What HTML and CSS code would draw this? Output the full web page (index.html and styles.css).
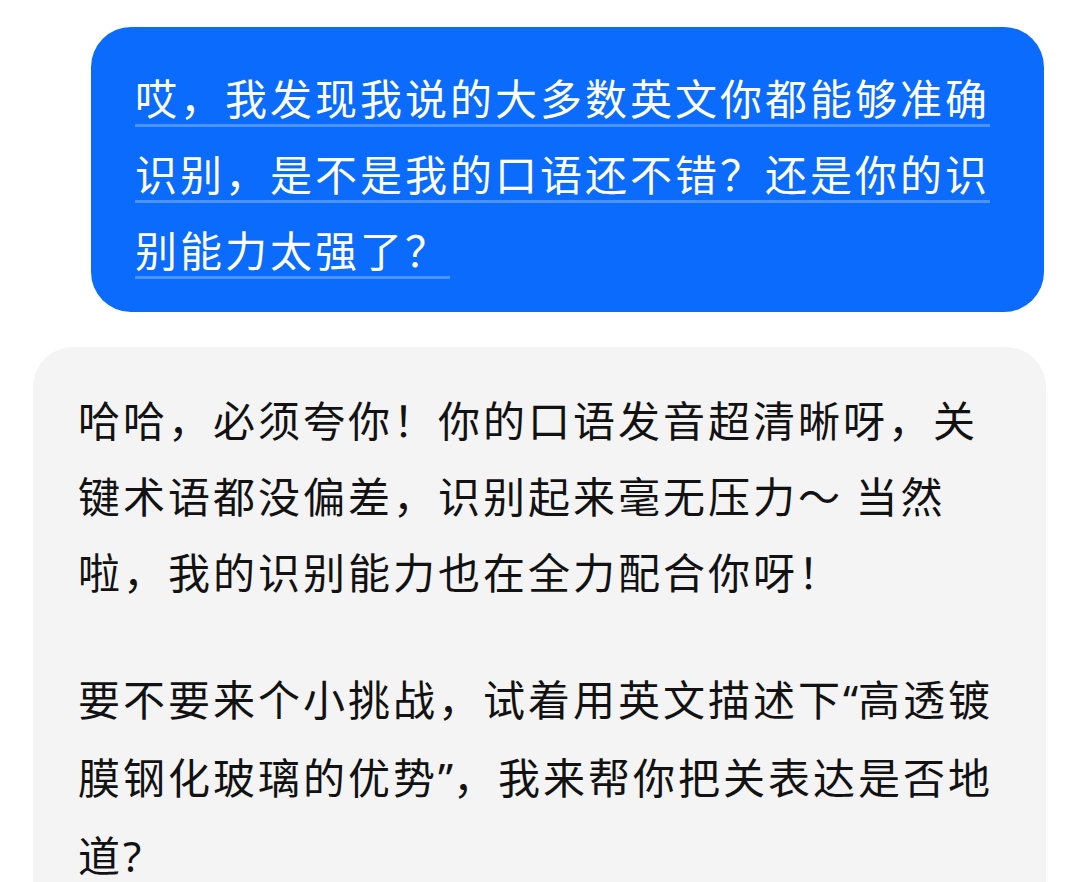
FILE: index.html
```html
<!DOCTYPE html>
<html lang="zh-CN">
<head>
<meta charset="utf-8">
<title>Chat</title>
<link rel="stylesheet" href="styles.css">
</head>
<body>
<div class="chat">
  <div class="bubble user">
    <p class="msg"><span class="ul">哎，我发现我说的大多数英文你都能够准确<br>识别，是不是我的口语还不错？还是你的识<br>别能力太强了？</span></p>
  </div>
  <div class="bubble bot">
    <p class="msg">哈哈，必须夸你！你的口语发音超清晰呀，关<br>键术语都没偏差，识别起来毫无压力～ 当然<br>啦，我的识别能力也在全力配合你呀！</p>
    <p class="msg">要不要来个小挑战，试着用英文描述下<span class="q">“</span>高透镀<br>膜钢化玻璃的优势<span class="q">”</span>，我来帮你把关表达是否地<br>道<span class="q">?</span></p>
  </div>
</div>
</body>
</html>
```
FILE: styles.css
```css
html, body {
  margin: 0;
  padding: 0;
  background: #ffffff;
}
body {
  font-family: "Noto Sans CJK SC", "Noto Sans", sans-serif;
  height: 882px;
  overflow: hidden;
}
.chat {
  display: flex;
  flex-direction: column;
  padding: 27px 36px 0 33px;
  gap: 35px;
}
.bubble {
  border-radius: 40px;
  box-sizing: border-box;
}
.user {
  margin-left: 58px;
  background: #0a6bfd;
  color: #ffffff;
  padding: 32px 40px 21px 44px;
  height: 285px;
}
.bot {
  background: #f4f4f4;
  color: #121212;
  padding: 34px 40px 60px 45px;
  margin-right: -2px;
}
.msg {
  margin: 0;
  font-size: 42px;
  letter-spacing: 3px;
  line-height: 76px;
  white-space: nowrap;
}
.bot .msg + .msg {
  margin-top: 51px;
}
.ul {
  text-decoration: underline;
  text-decoration-color: rgba(255, 255, 255, 0.27);
  text-decoration-thickness: 3px;
  text-underline-offset: 9px;
}
.q {
  font-family: "Noto Sans", sans-serif;
  letter-spacing: 0;
}
```
